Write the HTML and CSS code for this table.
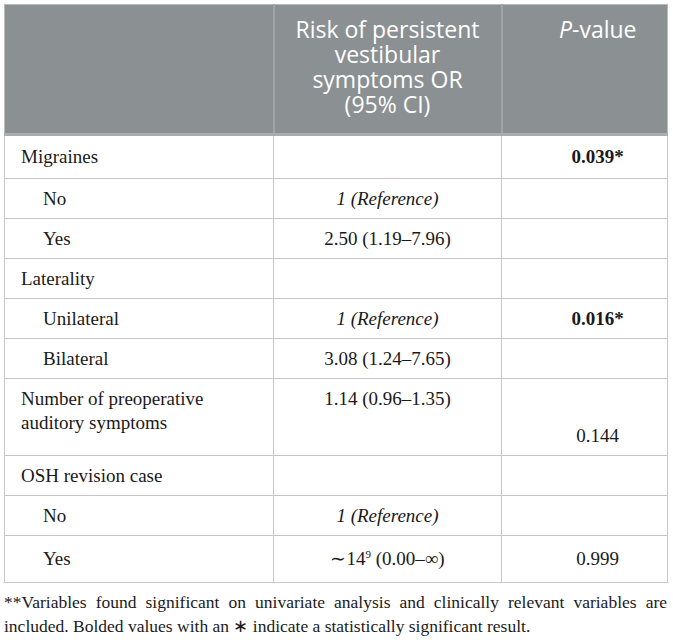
FILE: index.html
```html
<!doctype html>
<html lang="en">
  <head>
    <meta charset="UTF-8" />
    <meta name="viewport" content="width=device-width, initial-scale=1.0" />
    <title>Risk of persistent vestibular symptoms</title>
    <link rel="stylesheet" href="styles.css">
  </head>
  <body>
    <div class="wrap">
      <table class="results">
        <colgroup>
          <col class="col-var">
          <col class="col-or">
          <col class="col-p">
        </colgroup>
        <thead>
          <tr>
            <th></th>
            <th class="c-or">Risk of persistent vestibular symptoms OR (95% CI)</th>
            <th class="c-p"><i>P</i>-value</th>
          </tr>
        </thead>
        <tbody>
          <tr class="first">
            <td>Migraines</td>
            <td class="c-or"></td>
            <td class="c-p"><b>0.039*</b></td>
          </tr>
          <tr>
            <td class="sub">No</td>
            <td class="c-or"><i>1 (Reference)</i></td>
            <td class="c-p"></td>
          </tr>
          <tr>
            <td class="sub">Yes</td>
            <td class="c-or">2.50 (1.19–7.96)</td>
            <td class="c-p"></td>
          </tr>
          <tr>
            <td>Laterality</td>
            <td class="c-or"></td>
            <td class="c-p"></td>
          </tr>
          <tr>
            <td class="sub">Unilateral</td>
            <td class="c-or"><i>1 (Reference)</i></td>
            <td class="c-p"><b>0.016*</b></td>
          </tr>
          <tr>
            <td class="sub">Bilateral</td>
            <td class="c-or">3.08 (1.24–7.65)</td>
            <td class="c-p"></td>
          </tr>
          <tr class="tall">
            <td>Number of preoperative auditory symptoms</td>
            <td class="c-or">1.14 (0.96–1.35)</td>
            <td class="c-p">0.144</td>
          </tr>
          <tr>
            <td>OSH revision case</td>
            <td class="c-or"></td>
            <td class="c-p"></td>
          </tr>
          <tr>
            <td class="sub">No</td>
            <td class="c-or"><i>1 (Reference)</i></td>
            <td class="c-p"></td>
          </tr>
          <tr class="last">
            <td class="sub">Yes</td>
            <td class="c-or">∼14<sup>9</sup> (0.00–∞)</td>
            <td class="c-p">0.999</td>
          </tr>
        </tbody>
      </table>
      <p class="note">**Variables found significant on univariate analysis and clinically relevant variables are included. Bolded values with an ∗ indicate a statistically significant result.</p>
    </div>
  </body>
</html>
```

FILE: styles.css
```css
body {
  margin: 0;
  background: #ffffff;
  font-family: "Liberation Serif", "Times New Roman", serif;
  color: #1a1a1a;
}
.wrap {
  padding: 4px 6px 0 4px;
}
.results {
  width: 663px;
  table-layout: fixed;
  border-collapse: collapse;
  border: 1px solid #b9bcbb;
  font-size: 19px;
}
.col-var {
  width: 269px;
}
.col-or {
  width: 228px;
}
.col-p {
  width: 166px;
}
.results th {
  background: #8b9093;
  color: #ffffff;
  font-family: "Open Sans", "DejaVu Sans", sans-serif;
  font-weight: 400;
  font-size: 23px;
  line-height: 25px;
  padding: 12px 16px 16px;
  vertical-align: top;
  border-left: 2px solid #9fa4a6;
  border-bottom: 3px solid #a9adaf;
}
.results th:first-child {
  border-left: none;
}
.results td {
  line-height: 24px;
  padding: 8px 16px 7px 16px;
  border: 1px solid #c6c8c7;
  vertical-align: middle;
}
.c-or {
  text-align: center;
}
.results .c-p {
  text-align: center;
  padding-left: 40px;
  padding-right: 14px;
}
.results td.sub {
  padding-left: 38px;
}
.results tr.first td {
  padding-top: 9px;
  padding-bottom: 9px;
}
.results tr.tall td {
  vertical-align: top;
  padding-bottom: 20px;
}
.results tr.tall td.c-p {
  vertical-align: bottom;
  padding-bottom: 7px;
}
.results tr.last td {
  padding-top: 11px;
  padding-bottom: 11px;
}
sup {
  font-size: 11px;
  line-height: 0;
}
.note {
  margin: 7px 0 0 0;
  font-size: 17.5px;
  line-height: 24px;
  text-align: justify;
  color: #1a1a1a;
}
```
